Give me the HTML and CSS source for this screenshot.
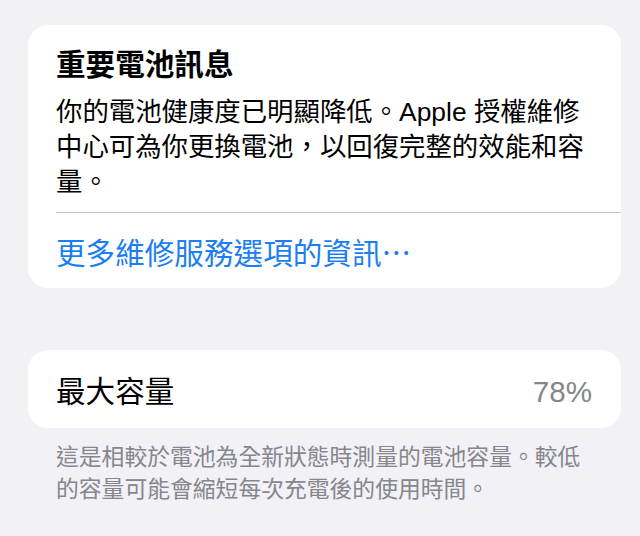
FILE: index.html
```html
<!DOCTYPE html>
<html lang="zh-Hant">
<head>
<meta charset="utf-8">
<link rel="stylesheet" href="styles.css">
</head>
<body>
<div class="page">
  <section class="card info">
    <div class="info-body">
      <h1 class="title">重要電池訊息</h1>
      <p class="text">你的電池健康度已明顯降低。Apple 授權維修<br>中心可為你更換電池，以回復完整的效能和容<br>量。</p>
    </div>
    <div class="sep"></div>
    <div class="link">更多維修服務選項的資訊⋯</div>
  </section>

  <section class="card row">
    <span class="label">最大容量</span>
    <span class="value">78%</span>
  </section>
  <p class="caption">這是相較於電池為全新狀態時測量的電池容量。較低<br>的容量可能會縮短每次充電後的使用時間。</p>
</div>
</body>
</html>
```

FILE: styles.css
```css
* { box-sizing: border-box; }
html, body {
  margin: 0;
  padding: 0;
  background: #f1f1f6;
  width: 640px;
  height: 536px;
  overflow: hidden;
}
body {
  font-family: "Liberation Sans", "Noto Sans CJK TC", sans-serif;
  color: #000;
}
.page {
  padding: 25px 19px 0 28px;
}
.card {
  background: #fff;
  border-radius: 20px;
}
.info {
  padding: 22px 0 16px 0;
}
.info-body {
  padding: 0 28px;
}
.title {
  margin: 0;
  font-size: 29.6px;
  line-height: 36px;
  font-weight: 700;
}
.text {
  margin: 12px 0 12px 0;
  font-size: 26.4px;
  line-height: 35px;
  font-weight: 400;
}
.sep {
  height: 1px;
  background: #c9c9cd;
  margin-left: 28px;
}
.link {
  margin: 23px 28px 0 28px;
  font-size: 29.6px;
  line-height: 36px;
  color: #1b7ef2;
}
.row {
  margin-top: 62px;
  display: flex;
  justify-content: space-between;
  align-items: center;
  padding: 24px 29px 18px 28px;
}
.label {
  font-size: 29.6px;
  line-height: 36px;
}
.value {
  font-size: 29.6px;
  line-height: 36px;
  color: #86868b;
}
.caption {
  margin: 13px 0 0 0;
  padding: 0 28px;
  font-size: 22.8px;
  line-height: 32px;
  color: #86868b;
}
```
